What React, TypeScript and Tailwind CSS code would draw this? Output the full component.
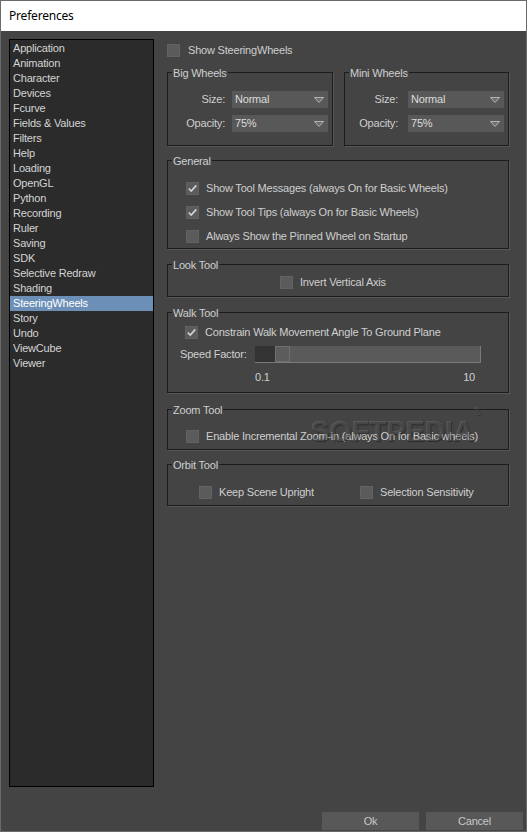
import type { ReactNode } from 'react'

const CATEGORIES = [
  'Application', 'Animation', 'Character', 'Devices', 'Fcurve', 'Fields & Values',
  'Filters', 'Help', 'Loading', 'OpenGL', 'Python', 'Recording', 'Ruler', 'Saving',
  'SDK', 'Selective Redraw', 'Shading', 'SteeringWheels', 'Story', 'Undo', 'ViewCube', 'Viewer',
]
const SELECTED = 'SteeringWheels'

function CheckBox({ checked = false }: { checked?: boolean }) {
  return (
    <span className="w-[13px] h-[13px] shrink-0 bg-[#5b5b5b] border border-[#626262] flex items-center justify-center">
      {checked && (
        <svg width="11" height="11" viewBox="0 0 11 11">
          <path d="M1.8 5.6 L4.3 8.1 L9.3 2.4" fill="none" stroke="#d2d2d2" strokeWidth="1.6" />
        </svg>
      )}
    </span>
  )
}

function Check({ checked, label }: { checked?: boolean; label: string }) {
  return (
    <div className="flex items-center gap-[7px] h-[13px]">
      <CheckBox checked={checked} />
      <span className="leading-[13px] text-[#cfcfcf] whitespace-nowrap">{label}</span>
    </div>
  )
}

function Group({ label, className, children }: { label: string; className: string; children?: ReactNode }) {
  return (
    <div className={`relative border border-[#1c1c1c] shadow-[1px_1px_0_0_#575757] ${className}`}>
      <span className="absolute -top-[7px] left-[4px] px-[1px] bg-[#444444] leading-[14px] text-[#cfcfcf] whitespace-nowrap">
        {label}
      </span>
      {children}
    </div>
  )
}

function Dropdown({ value }: { value: string }) {
  return (
    <div className="w-[96px] h-[17px] bg-[#585858] flex items-center justify-between pl-[3px] pr-[4px]">
      <span className="text-[#dcdcdc] leading-[17px]">{value}</span>
      <svg width="10" height="6" viewBox="0 0 10 6">
        <polygon points="0.5,0.5 9.5,0.5 5,5.5" fill="#6c6c6c" stroke="#b4b4b4" strokeWidth="1" />
      </svg>
    </div>
  )
}

function WheelRow({ label, value, gap }: { label: string; value: string; gap: string }) {
  return (
    <div className={`flex items-center justify-end h-[17px] ${gap}`}>
      <span className="text-[#cfcfcf]">{label}</span>
      <Dropdown value={value} />
    </div>
  )
}

export default function App() {
  return (
    <div className="w-[527px] h-[832px] border border-[#6a6a6a] bg-[#444444] flex flex-col font-['Liberation_Sans',Arial,sans-serif] text-[11px] tracking-[-0.2px] overflow-hidden">
      {/* title bar */}
      <div className="h-[30px] bg-white flex items-center pl-[8px] shrink-0">
        <span className="text-[12px] text-black font-['Noto_Sans','Liberation_Sans',sans-serif] tracking-[-0.2px]">Preferences</span>
      </div>

      <div className="flex pt-[8px] pl-[8px]">
        {/* category list */}
        <ul className="w-[145px] h-[748px] border border-black bg-[#2b2b2b] pt-[1px] shrink-0">
          {CATEGORIES.map(c => (
            <li
              key={c}
              className={`h-[15px] leading-[15px] pl-[3px] ${c === SELECTED ? 'bg-[#6b8fb6] text-white' : 'text-[#d4d4d4]'}`}
            >
              {c}
            </li>
          ))}
        </ul>

        {/* settings */}
        <div className="relative w-[342px] ml-[13px]">
          <div className="mt-[5px] flex items-center gap-[8px] h-[13px]">
            <CheckBox />
            <span className="text-[#cfcfcf] leading-[13px]">Show SteeringWheels</span>
          </div>

          <div className="mt-[15px] flex gap-[11px]">
            <Group label="Big Wheels" className="w-[166px] h-[74px]">
              <div className="flex flex-col gap-[7px] pt-[18px] pr-[4px]">
                <WheelRow label="Size:" value="Normal" gap="gap-[7px]" />
                <WheelRow label="Opacity:" value="75%" gap="gap-[7px]" />
              </div>
            </Group>
            <Group label="Mini Wheels" className="w-[165px] h-[74px]">
              <div className="flex flex-col gap-[7px] pt-[18px] pr-[4px]">
                <WheelRow label="Size:" value="Normal" gap="gap-[10px]" />
                <WheelRow label="Opacity:" value="75%" gap="gap-[10px]" />
              </div>
            </Group>
          </div>

          <Group label="General" className="mt-[14px] h-[89px]">
            <div className="flex flex-col gap-[11px] pt-[21px] pl-[18px]">
              <Check checked label="Show Tool Messages (always On for Basic Wheels)" />
              <Check checked label="Show Tool Tips (always On for Basic Wheels)" />
              <Check label="Always Show the Pinned Wheel on Startup" />
            </div>
          </Group>

          <Group label="Look Tool" className="mt-[15px] h-[33px]">
            <div className="flex pt-[11px] pl-[112px]">
              <Check label="Invert Vertical Axis" />
            </div>
          </Group>

          <Group label="Walk Tool" className="mt-[15px] h-[81px]">
            <div className="pt-[13px] pl-[17px]">
              <Check checked label="Constrain Walk Movement Angle To Ground Plane" />
            </div>
            <div className="flex items-center mt-[7px] pl-[12px]">
              <span className="w-[75px] text-[#cfcfcf]">Speed Factor:</span>
              <div className="w-[226px] h-[17px] flex bg-[#5a5a5a] border-r border-b border-[#7a7a7a]">
                <div className="w-[20px] h-full bg-[#333333]" />
                <div className="w-[15px] h-full bg-[#5c5c5c] border border-[#707070]" />
              </div>
            </div>
            <div className="flex justify-between w-[220px] ml-[87px] mt-[8px] leading-[13px] text-[#cfcfcf]">
              <span>0.1</span>
              <span>10</span>
            </div>
          </Group>

          <Group label="Zoom Tool" className="mt-[16px] h-[41px]">
            <div className="pt-[20px] pl-[18px]">
              <Check label="Enable Incremental Zoom-in (always On for Basic wheels)" />
            </div>
          </Group>

          <Group label="Orbit Tool" className="mt-[14px] h-[42px]">
            <div className="flex pt-[21px] pl-[31px]">
              <div className="w-[161px]">
                <Check label="Keep Scene Upright" />
              </div>
              <Check label="Selection Sensitivity" />
            </div>
          </Group>

          {/* watermark over the zoom tool box */}
          <span className="absolute left-[143px] top-[378px] pointer-events-none text-[29px] font-bold tracking-[-0.3px] text-white/[0.15] [text-shadow:1px_1px_1px_rgba(0,0,0,0.35)] leading-none whitespace-nowrap">
            SOFTPEDIA<sup className="text-[10px] font-normal align-top">®</sup>
          </span>
        </div>
      </div>

      <div className="flex justify-end gap-[7px] pr-[3px] mt-[25px]">
        <button className="w-[97px] h-[18px] bg-[#585858] text-[#c8c8c8] leading-[18px]">Ok</button>
        <button className="w-[97px] h-[18px] bg-[#585858] text-[#c8c8c8] leading-[18px]">Cancel</button>
      </div>
    </div>
  )
}
